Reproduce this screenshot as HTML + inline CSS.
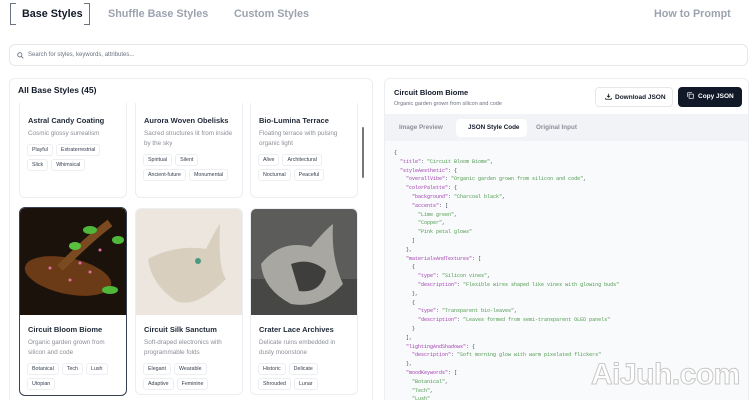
<!DOCTYPE html>
<html><head><meta charset="utf-8"><style>
*{box-sizing:border-box;margin:0;padding:0}
html,body{width:750px;height:400px;overflow:hidden}
body{background:#fff;font-family:"Liberation Sans",sans-serif;color:#111827;position:relative}
.abs{position:absolute}
.tab{position:absolute;top:8px;font-size:10.8px;font-weight:bold;color:#9ca3af}
.search{left:9px;top:44px;width:739px;height:22px;border:1px solid #e5e7eb;border-radius:6px;font-size:6px;color:#6b7280;padding:7px 0 0 18px}
.lp{left:9px;top:78px;width:364px;height:330px;border:1px solid #eceef1;border-radius:6px}
.card{position:absolute;width:108px;border:1px solid #eceef1;border-radius:6px;background:#fff;overflow:hidden}
.card h4{font-size:7.5px;font-weight:bold;margin:0 0 0 8px;color:#1f2937}
.card p{font-size:6.3px;color:#8b8f98;margin:4px 6px 0 8px;line-height:10px}
.tags{margin:5px 4px 0 7px;display:flex;flex-wrap:wrap;gap:3px}
.tags span{font-size:5.3px;color:#374151;border:1px solid #eceef1;border-radius:3px;padding:2px 4px;line-height:6px}
.rp{left:384px;top:78px;width:365px;height:330px;border:1px solid #eceef1;border-radius:6px;overflow:hidden}
.code{position:absolute;left:0;top:62px;width:365px;height:270px;background:#f9fafb;font-family:"Liberation Mono",monospace;font-size:5px;line-height:8.8px;padding:8px 0 0 9px;white-space:pre;color:#374151;overflow:hidden}
.k{color:#a23cb0}.s{color:#4d9a4d}
</style></head><body>
<div class="abs" style="left:10px;top:3px;width:6px;height:22px;border:1px solid #6b7280;border-right:none"></div>
<div class="abs" style="left:84px;top:3px;width:6px;height:22px;border:1px solid #6b7280;border-left:none"></div>
<div class="tab" style="left:22px;color:#111827">Base Styles</div>
<div class="tab" style="left:108px">Shuffle Base Styles</div>
<div class="tab" style="left:234px">Custom Styles</div>
<div class="tab" style="left:654px">How to Prompt</div>
<div class="abs search"><svg class="abs" style="left:7px;top:7px" width="7" height="7" viewBox="0 0 10 10"><circle cx="4" cy="4" r="3" fill="none" stroke="#6b7280" stroke-width="1.2"/><path d="M6.3 6.3 9 9" stroke="#6b7280" stroke-width="1.2"/></svg>Search for styles, keywords, attributes...</div>
<div class="abs lp"></div>
<div class="abs" style="left:18px;top:85px;font-size:8.5px;font-weight:bold">All Base Styles (45)</div>
<div class="abs" style="left:362px;top:127px;width:2px;height:51px;background:#777;border-radius:1px"></div>
<div class="abs" style="left:18px;top:103px;width:340px;height:96px;overflow:hidden">
 <div class="card" style="left:1px;top:-10px;height:105px;padding-top:22px"><h4>Astral Candy Coating</h4><p>Cosmic glossy surrealism</p><div class="tags"><span>Playful</span><span>Extraterrestrial</span><span>Slick</span><span>Whimsical</span></div></div>
 <div class="card" style="left:117px;top:-10px;height:105px;padding-top:22px"><h4>Aurora Woven Obelisks</h4><p>Sacred structures lit from inside by the sky</p><div class="tags"><span>Spiritual</span><span>Silent</span><span>Ancient-future</span><span>Monumental</span></div></div>
 <div class="card" style="left:232px;top:-10px;height:105px;padding-top:22px"><h4>Bio-Lumina Terrace</h4><p>Floating terrace with pulsing organic light</p><div class="tags"><span>Alive</span><span>Architectural</span><span>Nocturnal</span><span>Peaceful</span></div></div>
</div>
<div class="card" style="left:19px;top:207px;height:189px;border:1.5px solid #374151">
 <svg width="108" height="107" viewBox="0 0 108 107" style="display:block"><rect width="108" height="107" fill="#1c120c"/><ellipse cx="48" cy="68" rx="44" ry="18" fill="#6b3a16" transform="rotate(12 48 68)"/><path d="M40 60 Q70 30 90 15" stroke="#7a4a20" stroke-width="8" fill="none"/><ellipse cx="70" cy="22" rx="7" ry="4" fill="#4fb83a"/><ellipse cx="55" cy="38" rx="6" ry="4" fill="#5ac040"/><ellipse cx="98" cy="32" rx="6" ry="4" fill="#4fb83a"/><ellipse cx="90" cy="82" rx="8" ry="4" fill="#4fb83a"/><g fill="#e070a0"><circle cx="30" cy="60" r="1.5"/><circle cx="50" cy="72" r="1.5"/><circle cx="70" cy="64" r="1.5"/><circle cx="80" cy="42" r="1.5"/><circle cx="60" cy="55" r="1.5"/></g></svg>
 <div style="padding-top:10px"><h4>Circuit Bloom Biome</h4><p>Organic garden grown from silicon and code</p><div class="tags"><span>Botanical</span><span>Tech</span><span>Lush</span><span>Utopian</span></div></div></div>
<div class="card" style="left:135px;top:208px;height:187px">
 <svg width="108" height="106" viewBox="0 0 108 106" style="display:block"><rect width="108" height="106" fill="#ece6de"/><path d="M12 50 Q40 35 70 40 Q80 20 84 15 Q82 60 90 70 Q60 100 40 92 Q15 75 12 50Z" fill="#d8cfbf"/><circle cx="62" cy="52" r="3" fill="#4a9a80"/></svg>
 <div style="padding-top:10px"><h4>Circuit Silk Sanctum</h4><p>Soft-draped electronics with programmable folds</p><div class="tags"><span>Elegant</span><span>Wearable</span><span>Adaptive</span><span>Feminine</span></div></div></div>
<div class="card" style="left:250px;top:208px;height:187px">
 <svg width="108" height="106" viewBox="0 0 108 106" style="display:block"><rect width="108" height="106" fill="#5c5c5a"/><rect y="70" width="108" height="36" fill="#474745"/><path d="M10 55 Q30 30 60 38 Q75 20 82 15 Q80 50 92 75 Q70 100 40 95 Q12 80 10 55Z" fill="#a8a7a2"/><path d="M40 55 Q60 48 75 62 Q70 85 48 82Z" fill="#3e3e3c"/></svg>
 <div style="padding-top:10px"><h4>Crater Lace Archives</h4><p>Delicate ruins embedded in dusty moonstone</p><div class="tags"><span>Historic</span><span>Delicate</span><span>Shrouded</span><span>Lunar</span></div></div></div>

<div class="abs rp">
 <div class="abs" style="left:9px;top:9px;font-size:7.5px;font-weight:bold">Circuit Bloom Biome</div>
 <div class="abs" style="left:9px;top:22px;font-size:5.5px;color:#6b7280">Organic garden grown from silicon and code</div>
 <div class="abs" style="left:210px;top:8px;width:78px;height:20px;border:1px solid #e5e7eb;border-radius:4px;font-size:6.5px;font-weight:bold;padding:6px 0 0 19px">Download JSON<svg class="abs" style="left:9px;top:5px" width="7" height="7" viewBox="0 0 10 10"><path d="M5 1v5M3 4l2 2 2-2M1 7v2h8V7" stroke="#111" fill="none" stroke-width="1.1"/></svg></div>
 <div class="abs" style="left:293px;top:8px;width:64px;height:20px;background:#111827;border-radius:4px;font-size:6.5px;font-weight:bold;color:#fff;padding:6px 0 0 20px">Copy JSON<svg class="abs" style="left:9px;top:5px" width="7" height="7" viewBox="0 0 10 10"><rect x="3" y="3" width="6" height="6" fill="none" stroke="#fff"/><path d="M1 7V1h6" fill="none" stroke="#fff"/></svg></div>
 <div class="abs" style="left:0;top:35px;width:365px;height:27px;background:#f1f3f6"></div>
 <div class="abs" style="left:71px;top:40px;width:71px;height:18px;background:#fff;border-radius:4px"></div>
 <div class="abs" style="left:14px;top:45px;font-size:6.3px;font-weight:bold;color:#8b8f98">Image Preview</div>
 <div class="abs" style="left:83px;top:45px;font-size:6.3px;font-weight:bold;color:#111827">JSON Style Code</div>
 <div class="abs" style="left:151px;top:45px;font-size:6.3px;font-weight:bold;color:#8b8f98">Original Input</div>
 <div class="code">{
  <span class="k">"title"</span>: <span class="s">"Circuit Bloom Biome"</span>,
  <span class="k">"styleAesthetic"</span>: {
    <span class="k">"overallVibe"</span>: <span class="s">"Organic garden grown from silicon and code"</span>,
    <span class="k">"colorPalette"</span>: {
      <span class="k">"background"</span>: <span class="s">"Charcoal black"</span>,
      <span class="k">"accents"</span>: [
        <span class="s">"Lime green"</span>,
        <span class="s">"Copper"</span>,
        <span class="s">"Pink petal glows"</span>
      ]
    },
    <span class="k">"materialsAndTextures"</span>: [
      {
        <span class="k">"type"</span>: <span class="s">"Silicon vines"</span>,
        <span class="k">"description"</span>: <span class="s">"Flexible wires shaped like vines with glowing buds"</span>
      },
      {
        <span class="k">"type"</span>: <span class="s">"Transparent bio-leaves"</span>,
        <span class="k">"description"</span>: <span class="s">"Leaves formed from semi-transparent OLED panels"</span>
      }
    ],
    <span class="k">"lightingAndShadows"</span>: {
      <span class="k">"description"</span>: <span class="s">"Soft morning glow with warm pixelated flickers"</span>
    },
    <span class="k">"moodKeywords"</span>: [
      <span class="s">"Botanical"</span>,
      <span class="s">"Tech"</span>,
      <span class="s">"Lush"</span></div>
</div>
<div class="abs" style="left:591px;top:358px;font-size:30px;font-weight:bold;color:#fff;-webkit-text-stroke:1px #c8c8c8;letter-spacing:-0.5px">AiJuh.com</div>
</body></html>
